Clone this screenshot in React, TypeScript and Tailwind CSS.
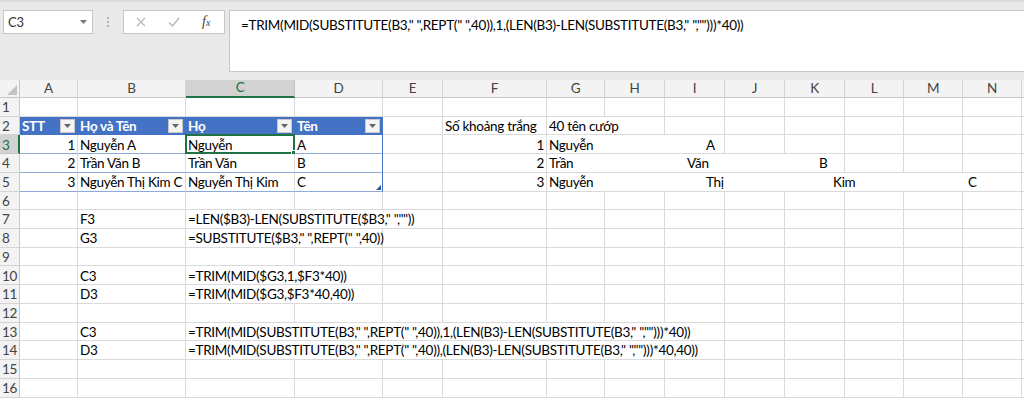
import React from "react";

const COLS = [58, 108, 109, 88, 60, 104, 58, 60, 60, 60, 60, 59, 59, 59];
const LETTERS = "ABCDEFGHIJKLMN".split("");

type Seg = {
  col: number;
  span?: number;
  content?: React.ReactNode;
  align?: "left" | "right";
  cls?: string;
};

type RowDef = { n: number; segs: Seg[]; selected?: boolean };

const words = (items: [string, number][]) => (
  <span className="flex">
    {items.map(([w, width], i) => (
      <span key={i} style={{ width: width || undefined }} className="shrink-0">
        {w}
      </span>
    ))}
  </span>
);

const Dropdown = () => (
  <span className="absolute right-[2px] top-[2px] w-[15px] h-[14px] bg-[#f4f4f4] border border-[#c9c9c9] flex items-center justify-center">
    <svg width="7" height="4" viewBox="0 0 7 4">
      <path d="M0 0 H7 L3.5 4 Z" fill="#666" />
    </svg>
  </span>
);

const ROWS: RowDef[] = [
  { n: 1, segs: [] },
  {
    n: 2,
    segs: [
      { col: 0, content: "STT", cls: "th" },
      { col: 1, content: "Họ và Tên", cls: "th" },
      { col: 2, content: "Họ", cls: "th" },
      { col: 3, content: "Tên", cls: "th" },
      { col: 5, content: "Số khoảng trắng" },
      { col: 6, span: 2, content: "40 tên cướp" },
    ],
  },
  {
    n: 3,
    selected: true,
    segs: [
      { col: 0, content: "1", align: "right", cls: "tb" },
      { col: 1, content: "Nguyễn A", cls: "tb" },
      { col: 2, content: "Nguyễn", cls: "tb sel" },
      { col: 3, content: "A", cls: "tb tr" },
      { col: 5, content: "1", align: "right" },
      { col: 6, span: 3, content: words([["Nguyễn", 157], ["A", 0]]) },
    ],
  },
  {
    n: 4,
    segs: [
      { col: 0, content: "2", align: "right", cls: "tb" },
      { col: 1, content: "Trần Văn B", cls: "tb" },
      { col: 2, content: "Trần Văn", cls: "tb" },
      { col: 3, content: "B", cls: "tb tr" },
      { col: 5, content: "2", align: "right" },
      { col: 6, span: 5, content: words([["Trần", 138], ["Văn", 132], ["B", 0]]) },
    ],
  },
  {
    n: 5,
    segs: [
      { col: 0, content: "3", align: "right", cls: "tb last" },
      { col: 1, content: "Nguyễn Thị Kim C", cls: "tb last" },
      { col: 2, content: "Nguyễn Thị Kim", cls: "tb last" },
      { col: 3, content: "C", cls: "tb tr last" },
      { col: 5, content: "3", align: "right" },
      { col: 6, span: 8, content: words([["Nguyễn", 157], ["Thị", 127], ["Kim", 135], ["C", 0]]) },
    ],
  },
  { n: 6, segs: [] },
  {
    n: 7,
    segs: [
      { col: 1, content: "F3" },
      { col: 2, span: 3, content: '=LEN($B3)-LEN(SUBSTITUTE($B3," ",""))' },
    ],
  },
  {
    n: 8,
    segs: [
      { col: 1, content: "G3" },
      { col: 2, span: 2, content: '=SUBSTITUTE($B3," ",REPT(" ",40))' },
    ],
  },
  { n: 9, segs: [] },
  {
    n: 10,
    segs: [
      { col: 1, content: "C3" },
      { col: 2, span: 2, content: "=TRIM(MID($G3,1,$F3*40))" },
    ],
  },
  {
    n: 11,
    segs: [
      { col: 1, content: "D3" },
      { col: 2, span: 2, content: "=TRIM(MID($G3,$F3*40,40))" },
    ],
  },
  { n: 12, segs: [] },
  {
    n: 13,
    segs: [
      { col: 1, content: "C3" },
      {
        col: 2,
        span: 7,
        content: '=TRIM(MID(SUBSTITUTE(B3," ",REPT(" ",40)),1,(LEN(B3)-LEN(SUBSTITUTE(B3," ","")))*40))',
      },
    ],
  },
  {
    n: 14,
    segs: [
      { col: 1, content: "D3" },
      {
        col: 2,
        span: 7,
        content: '=TRIM(MID(SUBSTITUTE(B3," ",REPT(" ",40)),(LEN(B3)-LEN(SUBSTITUTE(B3," ","")))*40,40))',
      },
    ],
  },
  { n: 15, segs: [] },
  { n: 16, segs: [] },
];

function Row({ def }: { def: RowDef }) {
  const cells: React.ReactNode[] = [];
  let c = 0;
  while (c < COLS.length) {
    const seg = def.segs.find((s) => s.col === c);
    const span = seg?.span ?? 1;
    let width = 0;
    for (let i = c; i < c + span; i++) width += COLS[i];
    const cls = seg?.cls ?? "";
    const isTh = cls.includes("th");
    const isTb = cls.includes("tb");
    const isSel = cls.includes("sel");
    const isTr = cls.includes("tr");
    const isLast = cls.includes("last");
    let base =
      "relative shrink-0 h-full flex items-center pl-[2px] pr-[2px] pt-[2px] whitespace-nowrap overflow-visible ";
    if (isTh) {
      base += "bg-[#4472c4] text-white font-bold border-r border-[#4472c4] ";
    } else if (isTb) {
      base += "bg-white border-b border-b-[#8ea9db] ";
      base += isTr ? "border-r border-r-[#4472c4] " : "border-r border-r-[#dadada] ";
    } else {
      base += "border-r border-b border-[#dadada] ";
    }
    if (seg?.align === "right") base += "justify-end ";
    cells.push(
      <div key={c} className={base} style={{ width }}>
        {seg?.content}
        {isTh && <Dropdown />}
        {isSel && (
          <>
            <span className="absolute left-[-1px] top-[-1px] right-[-1px] bottom-[-1px] border-2 border-[#217346] pointer-events-none" />
            <span className="absolute right-[-3px] bottom-[-3px] w-[6px] h-[6px] bg-[#217346] border border-white" />
          </>
        )}
        {isLast && isTr && (
          <svg className="absolute right-[1px] bottom-[1px]" width="5" height="5" viewBox="0 0 5 5">
            <path d="M5 0 V5 H0 Z" fill="#2f5597" />
          </svg>
        )}
      </div>
    );
    c += span;
  }
  return (
    <div className="flex h-[18.73px]">
      <div
        className={
          "shrink-0 w-[20px] h-full flex items-center pl-[2px] pt-[2px] border-b " +
          (def.selected
            ? "bg-[#d2d2d2] border-[#c4c4c4] border-r-2 border-r-[#217346] text-[#1e6e42]"
            : "bg-[#f3f3f3] border-[#d4d4d4] border-r border-r-[#c8c8c8] text-[#444]")
        }
      >
        {def.n}
      </div>
      {cells}
      <div className="flex-1 h-full border-b border-[#dadada]" />
    </div>
  );
}

export default function App() {
  return (
    <div className="w-[1024px] h-[398px] overflow-hidden bg-white font-[Lato,sans-serif] text-[13.5px] tracking-[-0.3px] text-black leading-none">
      {/* toolbar */}
      <div className="h-[80px] bg-[#e9e9e9] border-t-2 border-[#dcdcdc] flex items-start pt-[8px]">
        <div className="ml-[3px] w-[90px] h-[24px] bg-white border border-[#c6c6c6] flex items-center justify-between pl-[4px] pr-[5px] text-[13px] text-[#333]">
          <span>C3</span>
          <svg width="7" height="4" viewBox="0 0 7 4">
            <path d="M0 0 H7 L3.5 4 Z" fill="#777" />
          </svg>
        </div>
        <div className="w-[30px] h-[24px] flex flex-col items-center justify-center gap-[2px]">
          <span className="w-[2px] h-[2px] bg-[#b5b5b5]" />
          <span className="w-[2px] h-[2px] bg-[#b5b5b5]" />
          <span className="w-[2px] h-[2px] bg-[#b5b5b5]" />
        </div>
        <div className="w-[102px] h-[24px] bg-white border border-[#c6c6c6] flex items-center">
          <svg className="ml-[12px]" width="10" height="10" viewBox="0 0 10 10">
            <path d="M1 1 L9 9 M9 1 L1 9" stroke="#b8b8b8" strokeWidth="1.3" />
          </svg>
          <svg className="ml-[22px]" width="12" height="10" viewBox="0 0 12 10">
            <path d="M1 5.5 L4.5 9 L11 1" stroke="#b8b8b8" strokeWidth="1.4" fill="none" />
          </svg>
          <span className="ml-[22px] font-['Liberation_Serif',serif] italic text-[14px] text-[#444] tracking-normal">
            f<span className="text-[10px]">x</span>
          </span>
        </div>
        <div className="ml-[4px] flex-1 h-[62px] bg-white border border-r-0 border-[#c6c6c6] pl-[11px] pt-[8px] whitespace-nowrap">
          =TRIM(MID(SUBSTITUTE(B3," ",REPT(" ",40)),1,(LEN(B3)-LEN(SUBSTITUTE(B3," ","")))*40))
        </div>
      </div>
      {/* column headers */}
      <div className="flex h-[18px] bg-[#f3f3f3] text-[#444]">
        <div className="relative shrink-0 w-[20px] h-full border-r border-b border-[#c8c8c8]">
          <svg className="absolute right-[2px] bottom-[2px]" width="10" height="10" viewBox="0 0 10 10">
            <path d="M10 0 V10 H0 Z" fill="#c4c4c4" />
          </svg>
        </div>
        {COLS.map((w, i) => (
          <div
            key={i}
            style={{ width: w }}
            className={
              "shrink-0 h-full flex items-center justify-center border-r " +
              (i === 2
                ? "bg-[#d2d2d2] border-[#bdbdbd] border-b-2 border-b-[#217346] text-[#1e6e42]"
                : "border-[#d4d4d4] border-b border-b-[#c8c8c8]")
            }
          >
            {LETTERS[i]}
          </div>
        ))}
        <div className="flex-1 h-full border-b border-[#c8c8c8]" />
      </div>
      {ROWS.map((r) => (
        <Row key={r.n} def={r} />
      ))}
    </div>
  );
}
